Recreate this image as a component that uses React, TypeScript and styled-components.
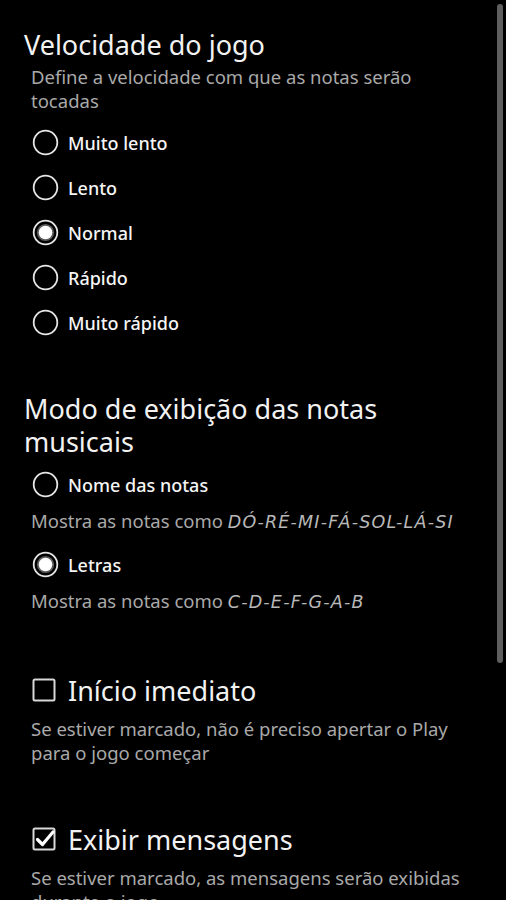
import * as React from 'react';
import styled, { createGlobalStyle } from 'styled-components';

const GlobalStyle = createGlobalStyle`
  html, body {
    margin: 0;
    padding: 0;
    background: #000;
    overflow: hidden;
  }
  body {
    font-family: 'Noto Sans', 'DejaVu Sans', sans-serif;
  }
`;

const Screen = styled.div`
  position: relative;
  width: 506px;
  height: 900px;
  background: #000;
  overflow: hidden;
  padding-top: 28px;
  box-sizing: border-box;
`;

const ScrollThumb = styled.div`
  position: absolute;
  right: 3px;
  top: 4px;
  width: 6px;
  height: 659px;
  border-radius: 3px;
  background: #5f5f5f;
`;

const Section = styled.section<{ $gap?: number }>`
  padding: 0 36px 0 24px;
  margin-bottom: ${(p) => p.$gap ?? 0}px;
`;

const Title = styled.h2`
  margin: 0;
  font-size: 27px;
  line-height: 33px;
  font-weight: 400;
  color: #f2f2f2;
`;

const Summary = styled.p<{ $top?: number }>`
  margin: ${(p) => p.$top ?? 4}px 0 0 7px;
  font-size: 18.5px;
  line-height: 24px;
  color: #a9a9a9;
`;

const Options = styled.div<{ $top: number }>`
  margin-top: ${(p) => p.$top}px;
`;

const OptionRow = styled.div`
  display: flex;
  align-items: center;
  height: 45px;
  padding-left: 8px;
  gap: 9px;
`;

const OptionLabel = styled.span`
  font-size: 18px;
  font-weight: 500;
  color: #f5f5f5;
`;

const OptionHint = styled.p`
  margin: 2px 0 8px 7px;
  font-size: 18.5px;
  line-height: 24px;
  color: #a9a9a9;

  em {
    font-family: 'DejaVu Sans', 'Noto Sans', sans-serif;
    font-size: 17.5px;
    font-style: italic;
    letter-spacing: 1.2px;
    color: #b8b8b8;
  }
`;

const CheckRow = styled.div`
  display: flex;
  align-items: center;
  height: 32px;
  padding-left: 8px;
  gap: 11px;
`;

const CheckLabel = styled.span`
  font-size: 27px;
  font-weight: 400;
  color: #f2f2f2;
`;

const Radio = ({ checked }: { checked?: boolean }) => (
  <svg width="27" height="27" viewBox="0 0 27 27">
    <circle cx="13.5" cy="13.5" r="11.8" fill="none" stroke="#e6e6e6" strokeWidth="1.8" />
    {checked ? (
      <>
        <circle cx="13.5" cy="13.5" r="8.6" fill="#9a9a9a" opacity="0.6" />
        <circle cx="13.5" cy="13.5" r="6.8" fill="#ffffff" />
      </>
    ) : null}
  </svg>
);

const Check = ({ checked }: { checked?: boolean }) => (
  <svg width="25" height="25" viewBox="0 0 25 25">
    <rect x="1.5" y="1.5" width="21" height="21" rx="1.5" fill="none" stroke="#d8d8d8" strokeWidth="2" />
    {checked ? (
      <path
        d="M5.5 12.5 L10.5 17.5 L21 5"
        fill="none"
        stroke="#ffffff"
        strokeWidth="3.2"
        strokeLinecap="round"
        strokeLinejoin="round"
      />
    ) : null}
  </svg>
);

const speeds = ['Muito lento', 'Lento', 'Normal', 'Rápido', 'Muito rápido'];

export default function App() {
  const speed = 'Normal';

  return (
    <>
      <GlobalStyle />
      <Screen>
        <Section $gap={47}>
          <Title>Velocidade do jogo</Title>
          <Summary>Define a velocidade com que as notas serão tocadas</Summary>
          <Options $top={7}>
            {speeds.map((s) => (
              <OptionRow key={s}>
                <Radio checked={s === speed} />
                <OptionLabel>{s}</OptionLabel>
              </OptionRow>
            ))}
          </Options>
        </Section>

        <Section $gap={60}>
          <Title>Modo de exibição das notas musicais</Title>
          <Options $top={4}>
            <OptionRow>
              <Radio />
              <OptionLabel>Nome das notas</OptionLabel>
            </OptionRow>
            <OptionHint>
              Mostra as notas como <em>DÓ-RÉ-MI-FÁ-SOL-LÁ-SI</em>
            </OptionHint>
            <OptionRow>
              <Radio checked />
              <OptionLabel>Letras</OptionLabel>
            </OptionRow>
            <OptionHint>
              Mostra as notas como <em>C-D-E-F-G-A-B</em>
            </OptionHint>
          </Options>
        </Section>

        <Section $gap={58}>
          <CheckRow>
            <Check />
            <CheckLabel>Início imediato</CheckLabel>
          </CheckRow>
          <Summary $top={11}>Se estiver marcado, não é preciso apertar o Play para o jogo começar</Summary>
        </Section>

        <Section>
          <CheckRow>
            <Check checked />
            <CheckLabel>Exibir mensagens</CheckLabel>
          </CheckRow>
          <Summary $top={11}>Se estiver marcado, as mensagens serão exibidas durante o jogo</Summary>
        </Section>

        <ScrollThumb />
      </Screen>
    </>
  );
}
